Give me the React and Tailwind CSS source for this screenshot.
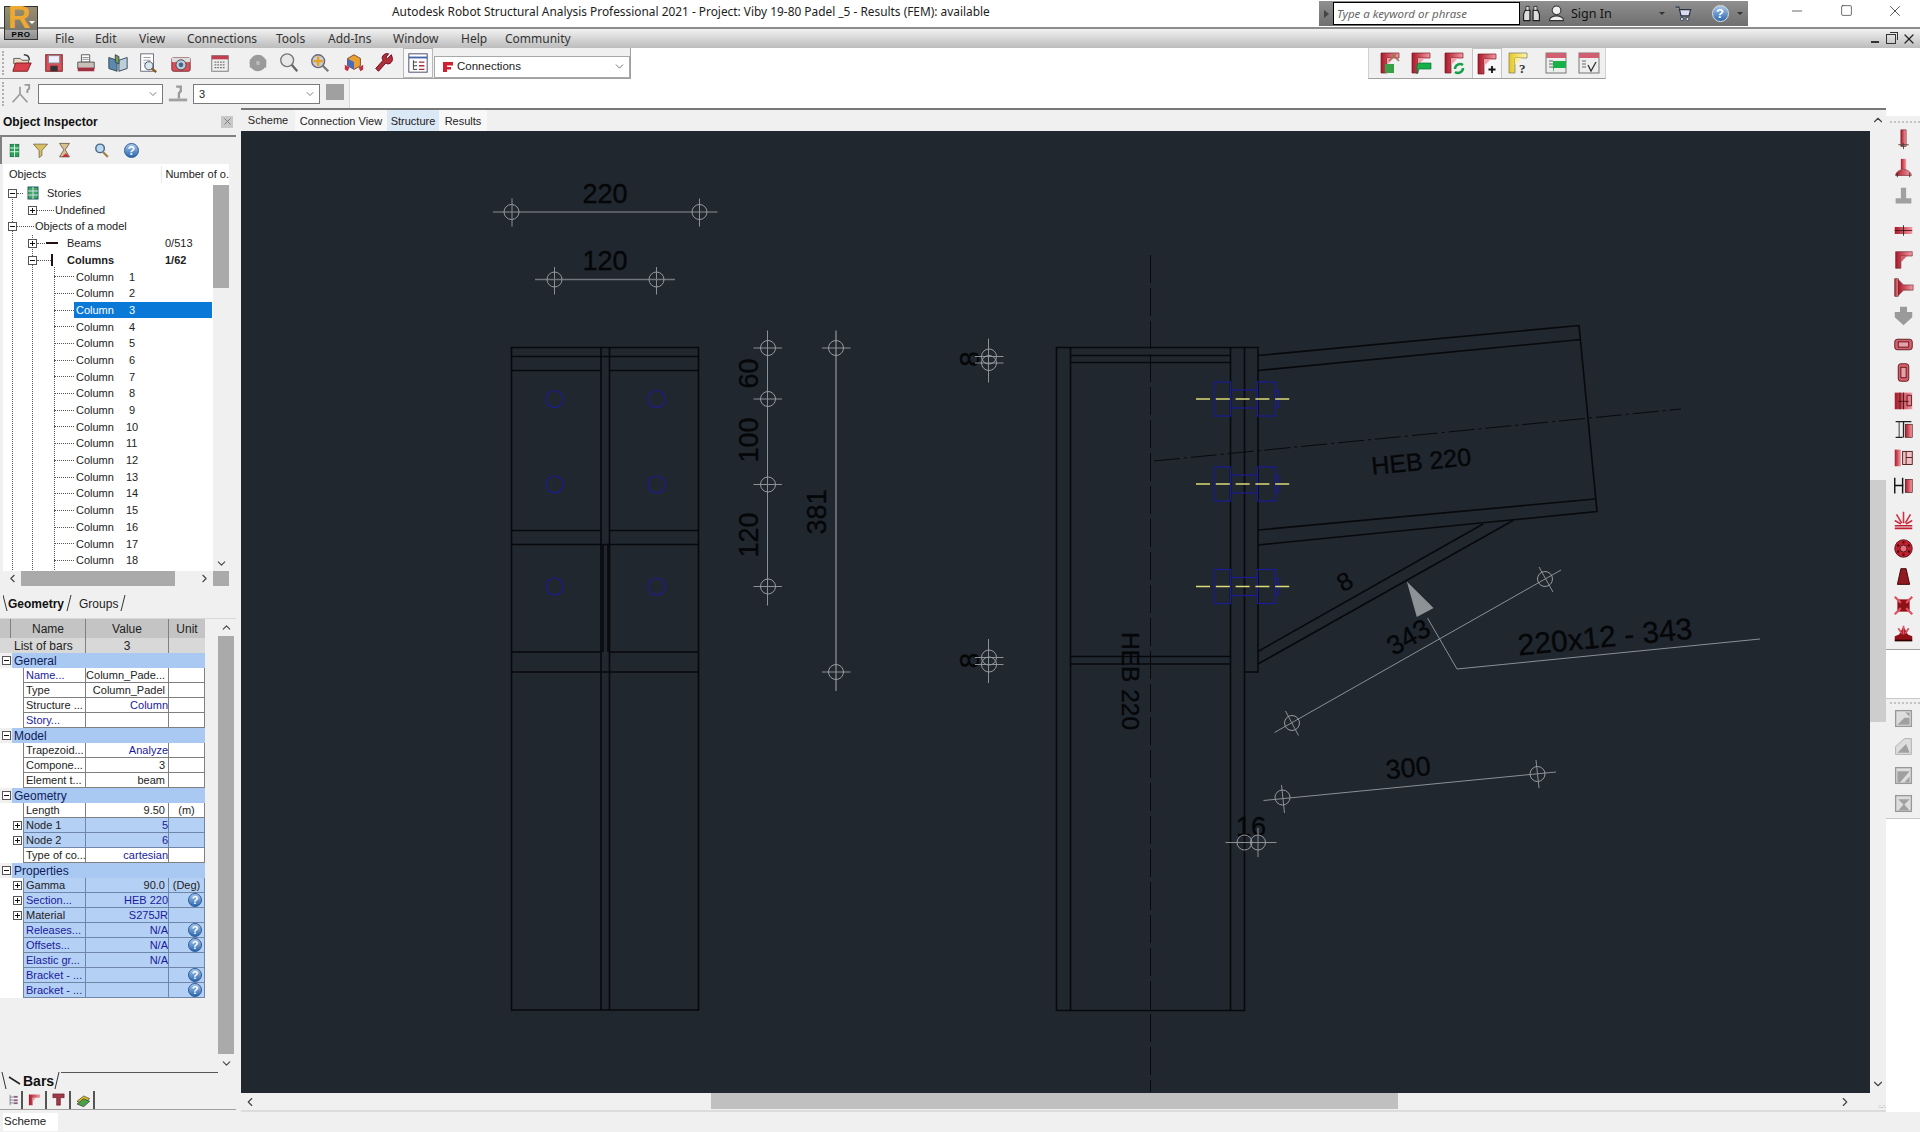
import React from 'react';
import { ChevronDown, ChevronUp, ChevronLeft, ChevronRight, X, Minus, Square } from 'lucide-react';

const menuItems = [
  { label: 'File', w: 'w-[40px]' },
  { label: 'Edit', w: 'w-[44px]' },
  { label: 'View', w: 'w-[48px]' },
  { label: 'Connections', w: 'w-[89px]' },
  { label: 'Tools', w: 'w-[52px]' },
  { label: 'Add-Ins', w: 'w-[65px]' },
  { label: 'Window', w: 'w-[68px]' },
  { label: 'Help', w: 'w-[44px]' },
  { label: 'Community', w: 'w-[80px]' },
];

function Ic({ children, size = 22, className = '' }) {
  return (
    <svg width={size} height={size} viewBox="0 0 24 24" className={`shrink-0 ${className}`}>
      {children}
    </svg>
  );
}

/* ---- main toolbar ---- */
const mainIcons = [
  { x: 'w-[33px]', el: <><path d="M3 7h7l2 2h7v4H3z" fill="#e8d9c0" stroke="#555" /><path d="M2 21l3-9h17l-4 9z" fill="#d8404c" stroke="#7a1a20" /><path d="M14 3c4 0 6 2 6 6" fill="none" stroke="#333" strokeWidth="1.5" /></> },
  { x: 'w-[32px]', el: <><rect x="3" y="3" width="18" height="18" fill="#d8505c" stroke="#7a1a20" /><rect x="6" y="4" width="12" height="8" fill="#eef" stroke="#888" /><rect x="8" y="15" width="8" height="6" fill="#333" /></> },
  { x: 'w-[32px]', el: <><path d="M7 3h9v8H7z" fill="#fff" stroke="#555" /><path d="M3 11h18v7H3z" fill="#c8c0b8" stroke="#555" /><rect x="3" y="17" width="18" height="4" fill="#a03040" /><path d="M8 6h7M8 8h7" stroke="#888" /></> },
  { x: 'w-[31px]', el: <><path d="M2 6l9 3v12l-9-3z" fill="#5a8ab0" stroke="#345" /><path d="M22 6l-9 3v12l9-3z" fill="#bcd0dc" stroke="#345" /><path d="M9 3l4 2v8l-4-2z" fill="#7a9a50" stroke="#345" /></> },
  { x: 'w-[30px]', el: <><rect x="4" y="2" width="14" height="19" fill="#fff" stroke="#667" /><path d="M7 6h8M7 9h8M7 12h4" stroke="#99a" /><circle cx="13" cy="15" r="4.5" fill="#d8e8f0" stroke="#445" /><path d="M16 18l5 4" stroke="#8a5a20" strokeWidth="2.5" /></> },
  { x: 'w-[36px]', el: <><rect x="2" y="6" width="20" height="15" rx="2" fill="#d8505c" stroke="#7a2a30" /><rect x="2" y="6" width="20" height="5" fill="#ddd" /><circle cx="12" cy="14" r="5.5" fill="#bcd" stroke="#444" /><circle cx="12" cy="14" r="2.5" fill="#468" /></> },
  { x: 'w-[42px]', el: <><rect x="3" y="4" width="18" height="17" fill="#eee" stroke="#777" /><rect x="3" y="4" width="18" height="4" fill="#c04050" /><path d="M6 11h12M6 14h12M6 17h12" stroke="#777" strokeWidth="1.5" strokeDasharray="2 1" /></> },
  { x: 'w-[34px]', el: <><circle cx="12" cy="12" r="9" fill="#9a9a9a" /><rect x="3" y="8" width="18" height="9" fill="#9a9a9a" /><path d="M11 10v4M13 10v4" stroke="#ddd" /></> },
  { x: 'w-[28px]', el: <><circle cx="10" cy="9" r="7" fill="#e8e8e8" stroke="#777" strokeWidth="1.5" /><path d="M15 14l6 7" stroke="#666" strokeWidth="2.5" /></> },
  { x: 'w-[34px]', el: <><circle cx="10" cy="10" r="7" fill="#ccc" stroke="#667" strokeWidth="1.5" /><path d="M10 5v10M5 10h10" stroke="#e8a020" strokeWidth="2.5" /><path d="M15 15l6 6" stroke="#777" strokeWidth="2.5" /></> },
  { x: 'w-[34px]', el: <><path d="M12 3l7 4v8l-7 4-7-4V7z" fill="#e8a030" stroke="#743" /><path d="M5 7l7 4v8l-7-4z" fill="#4a6ab8" /><path d="M2 14l5 3-2 4-3-2z" fill="#c03040" /><path d="M22 14l-5 3 2 4 3-2z" fill="#c03040" /></> },
  { x: 'w-[26px]', el: <path d="M20 3l-4 4-2-1 3-4c-3-1-7 1-7 5l1 2-8 9 3 3 8-9 2 1c4 0 6-4 5-7z" fill="#b03038" stroke="#602" /> },
];

function RedCorner({ children, yellow }) {
  const c = yellow ? 'url(#ygrad)' : 'url(#rgrad)';
  return (
    <Ic size={24}>
      <path d="M3 2h18v5H9v15H3z" fill={c} stroke={yellow ? '#776' : '#7a1a24'} strokeWidth=".7" />
      <path d="M9 7h7l-7 7z" fill={yellow ? '#f6eea0' : '#f0a0a8'} />
      {children}
    </Ic>
  );
}

const Tb2 = ({ children, w }) => <div className={`flex justify-center ${w}`}>{children}</div>;

function TopToolbar2() {
  return (
    <div className="flex h-[31px] w-[238px] items-center border-b border-[#a0a0a0] border-x border-x-[#d0d0d0] bg-[#f0f0f0] pl-[8px]">
      <Tb2 w="w-[26px]"><RedCorner><path d="M7 13h9v9H7z" fill="#3aa048" /><path d="M14 3l7 7M18 3l-7 7" stroke="#a07050" strokeWidth="1.5" /></RedCorner></Tb2>
      <Tb2 w="w-[36px]"><RedCorner><path d="M10 12h12v6H10l-2 5v-9z" fill="#18b048" stroke="#063" strokeWidth=".6" /></RedCorner></Tb2>
      <Tb2 w="w-[30px]"><RedCorner><path d="M13 18a5 5 0 0 1 8-4M21 17a5 5 0 0 1-8 4" fill="none" stroke="#18a048" strokeWidth="2.5" /></RedCorner></Tb2>
      <div className="ml-[3px] flex h-[30px] w-[30px] items-center justify-center border-x border-t border-[#c4c4c4] bg-[#f7f7f7]">
        <RedCorner><path d="M17 14v7M13.500 17.500h7" stroke="#111" strokeWidth="1.8" /></RedCorner>
      </div>
      <Tb2 w="w-[31px]"><RedCorner yellow><text x="13" y="22" fontSize="13" fontWeight="700" fontFamily="'Liberation Serif', serif" fill="#333">?</text></RedCorner></Tb2>
      <Tb2 w="w-[45px]">
        <Ic size={24}><rect x="2" y="2" width="20" height="20" fill="#eee" stroke="#777" /><rect x="2" y="2" width="20" height="5" fill="#d06070" /><path d="M5 10h4M5 13h4M5 16h4" stroke="#666" /><path d="M10 10h12v7H10l-1 5v-12z" fill="#18b048" /></Ic>
      </Tb2>
      <Tb2 w="w-[22px]">
        <Ic size={24}><rect x="2" y="2" width="20" height="20" fill="#eee" stroke="#777" /><rect x="2" y="2" width="20" height="5" fill="#d06070" /><path d="M5 10h4M5 13h4M5 16h4" stroke="#666" /><path d="M11 14l3 6 5-9" fill="none" stroke="#333" strokeWidth="1.3" /></Ic>
      </Tb2>
    </div>
  );
}

function Combo({ w, children }) {
  return (
    <div className={`mt-[1px] flex h-[20px] items-center justify-between border border-[#7a7a7a] bg-white pl-[5px] pr-[3px] ${w}`}>
      <div className="flex items-center gap-[3px] text-[11px] text-[#222]">{children}</div>
      <ChevronDown size={12} strokeWidth={1.5} className="text-[#555]" />
    </div>
  );
}

/* ---- tree ---- */
const dotted = 'border-t border-dotted border-[#555]';

function PlusBox({ minus, className = '' }) {
  return (
    <span className={`relative block h-[9px] w-[9px] shrink-0 border border-[#555] bg-white ${className}`}>
      <span className="absolute left-[1px] top-[3px] h-[1px] w-[5px] bg-[#111]" />
      {!minus && <span className="absolute left-[3px] top-[1px] h-[5px] w-[1px] bg-[#111]" />}
    </span>
  );
}

function TreeTop() {
  return (
    <>
      <div className="flex h-[16.7px] items-center pl-[8px]">
        <PlusBox minus /><span className={`w-[6px] ${dotted}`} />
        <svg width="14" height="14" viewBox="0 0 14 14" className="ml-[3px]"><rect x="2" y="1" width="10" height="12" fill="#3aa860" stroke="#256" /><path d="M2 5h10M2 9h10M7 1v12" stroke="#dde" /></svg>
        <span className="ml-[7px]">Stories</span>
      </div>
      <div className="flex h-[16.7px] items-center pl-[28px]">
        <PlusBox /><span className={`w-[17px] ${dotted}`} /><span className="ml-[1px]">Undefined</span>
      </div>
      <div className="flex h-[16.7px] items-center pl-[8px]">
        <PlusBox minus /><span className={`w-[17px] ${dotted}`} /><span className="ml-[1px]">Objects of a model</span>
      </div>
      <div className="flex h-[16.7px] items-center pl-[28px]">
        <PlusBox /><span className={`w-[8px] ${dotted}`} />
        <span className="ml-[1px] h-[2px] w-[12px] bg-[#201010]" />
        <span className="ml-[9px] w-[98px]">Beams</span>
        <span>0/513</span>
      </div>
      <div className="flex h-[16.7px] items-center pl-[28px] font-bold">
        <PlusBox minus /><span className={`w-[14px] ${dotted}`} />
        <span className="h-[12px] w-[2px] bg-[#201010]" />
        <span className="ml-[14px] w-[98px]">Columns</span>
        <span>1/62</span>
      </div>
    </>
  );
}

function ColumnRow({ n }) {
  const selected = n === 3;
  return (
    <div className="flex h-[16.7px] items-center pl-[54px]">
      <span className={`w-[20px] ${dotted}`} />
      <span className={`flex h-[15.500px] w-[138px] items-center pl-[2px] ${selected ? 'bg-[#0a78d7] text-white' : ''}`}>
        <span className="w-[50px]">Column</span>
        <span className={n > 9 ? 'w-[14px]' : 'w-[14px] pl-[3px]'}>{n}</span>
      </span>
    </div>
  );
}

/* ---- property grid ---- */
const gridRows = [
  { sec: 'General' },
  { name: 'Name...', nb: 1, value: 'Column_Pade...', left: 1 },
  { name: 'Type', value: 'Column_Padel' },
  { name: 'Structure ...', value: 'Column', vb: 1 },
  { name: 'Story...', nb: 1 },
  { sec: 'Model' },
  { name: 'Trapezoid...', value: 'Analyze', vb: 1 },
  { name: 'Compone...', value: '3' },
  { name: 'Element t...', value: 'beam' },
  { sec: 'Geometry' },
  { name: 'Length', value: '9.50', unit: '(m)' },
  { name: 'Node 1', value: '5', vb: 1, hl: 1, plus: 1 },
  { name: 'Node 2', value: '6', vb: 1, hl: 1, plus: 1 },
  { name: 'Type of co...', value: 'cartesian', vb: 1 },
  { sec: 'Properties' },
  { name: 'Gamma', value: '90.0', unit: '(Deg)', hl: 1, plus: 1 },
  { name: 'Section...', nb: 1, value: 'HEB 220', vb: 1, hl: 1, plus: 1, help: 1 },
  { name: 'Material', value: 'S275JR', vb: 1, hl: 1, plus: 1 },
  { name: 'Releases...', nb: 1, value: 'N/A', vb: 1, hl: 1, help: 1 },
  { name: 'Offsets...', nb: 1, value: 'N/A', vb: 1, hl: 1, help: 1 },
  { name: 'Elastic gr...', nb: 1, value: 'N/A', vb: 1, hl: 1 },
  { name: 'Bracket - ...', nb: 1, hl: 1, help: 1 },
  { name: 'Bracket - ...', nb: 1, hl: 1, help: 1 },
];

function HelpDot({ size = 'h-[14px] w-[14px] text-[11px]' }) {
  return (
    <span className={`flex items-center justify-center rounded-full border border-[#2a5a9a] bg-gradient-to-b from-[#a8c8e8] to-[#2a68b0] font-bold leading-none text-white ${size}`}>?</span>
  );
}

function GridRow({ row }) {
  if (row.sec) {
    return (
      <div className="flex h-[15px] items-center">
        <PlusBox minus className="ml-[2px]" />
        <div className="ml-[1px] flex h-[15px] w-[193px] items-center bg-[#a9c9f2] pl-[2px] text-[12px] text-[#10205a]">{row.sec}</div>
      </div>
    );
  }
  const border = row.hl ? 'border-[#6f86a8]' : 'border-[#808080]';
  const bg = row.hl ? 'bg-[#b5d0f5]' : 'bg-white';
  return (
    <div className="flex h-[15px] items-center bg-white">
      <div className="flex w-[23px] justify-end pr-[1px]">{row.plus && <PlusBox />}</div>
      <div className={`flex h-[15px] w-[63px] items-center overflow-hidden whitespace-nowrap border-b border-l border-r ${border} ${bg} pl-[2px] ${row.nb ? 'text-[#1a1a9c]' : 'text-[#222]'}`}>{row.name}</div>
      <div className={`flex h-[15px] w-[83px] items-center justify-end whitespace-nowrap border-b border-r ${border} ${bg} ${row.vb ? 'text-[#1a1a9c]' : 'pr-[3px] text-[#222]'}`}>{row.value}</div>
      <div className={`flex h-[15px] w-[36px] items-center border-b border-r ${border} ${bg} text-[#222] ${row.help ? 'justify-end pr-[2px]' : 'justify-center'}`}>
        {row.help ? <HelpDot /> : row.unit}
      </div>
    </div>
  );
}

/* ---- left panel ---- */
function ObjectInspector() {
  return (
    <div className="flex h-full w-[236px] flex-col bg-[#f0f0f0] font-['Liberation_Sans',sans-serif]">
      <div className="flex h-[27px] items-center justify-between pl-[3px] pr-[3px]">
        <span className="text-[12px] font-bold text-[#111]">Object Inspector</span>
        <span className="flex h-[12px] w-[12px] items-center justify-center bg-[#c8c8c8] text-[#777]"><X size={11} strokeWidth={2} /></span>
      </div>
      <div className="flex h-[29px] items-center gap-0 border-l-2 border-t-2 border-[#808080] pl-[5px]">
        <Ic size={15}><rect x="5" y="2" width="14" height="20" fill="#2aa050" stroke="#154" /><path d="M5 8h14M5 14h14M12 2v20" stroke="#dfe" strokeWidth="1.5" /></Ic>
        <Ic size={17} className="ml-[10px]"><path d="M2 3h20l-8 9v7l-4 3V12z" fill="#d8c060" stroke="#654" /></Ic>
        <Ic size={17} className="ml-[7px]"><path d="M5 2h14l-6 9 6 10H5l6-10z" fill="#d8c090" stroke="#543" /><path d="M8 21l6-5 5 5z" fill="#c03040" /></Ic>
        <Ic size={17} className="ml-[20px]"><circle cx="10" cy="9" r="6" fill="#bcd8f0" stroke="#468" strokeWidth="2" /><path d="M14 14l7 7" stroke="#a08050" strokeWidth="3" /></Ic>
        <HelpDot size="ml-[14px] h-[15px] w-[15px] text-[12px]" />
      </div>
      <div className="ml-[3px] flex h-[422px] w-[226px] flex-col bg-white text-[11px] text-[#222]">
        <div className="flex h-[21px] items-center">
          <span className="w-[162px] border-r border-[#e8e8e8] pl-[6px]">Objects</span>
          <span className="whitespace-nowrap pl-[3px]">Number of o.</span>
        </div>
        <div className="flex h-[386px]">
          <div className="relative w-[210px] overflow-hidden">
            <span className="absolute left-[9px] top-[14px] h-[373px] border-l border-dotted border-[#555]" />
            <span className="absolute left-[29px] top-[50px] h-[337px] border-l border-dotted border-[#555]" />
            <span className="absolute left-[51px] top-[82px] h-[305px] border-l border-dotted border-[#555]" />
            <div className="relative -ml-[3px]">
              <TreeTop />
              {Array.from({ length: 18 }, (_, i) => <ColumnRow key={i} n={i + 1} />)}
            </div>
          </div>
          <div className="flex w-[16px] flex-col bg-[#f0f0f0]">
            <div className="h-[103px] bg-[#aaaaaa]" />
            <div className="flex-1" />
            <div className="flex h-[16px] items-center justify-center text-[#444]"><ChevronDown size={13} strokeWidth={2} /></div>
          </div>
        </div>
        <div className="flex h-[15px] bg-[#f0f0f0]">
          <div className="flex w-[18px] items-center justify-center text-[#444]"><ChevronLeft size={13} strokeWidth={2} /></div>
          <div className="w-[154px] bg-[#aaaaaa]" />
          <div className="flex w-[38px] items-center justify-end pr-[2px] text-[#444]"><ChevronRight size={13} strokeWidth={2} /></div>
          <div className="w-[16px] bg-[#aaaaaa]" />
        </div>
      </div>
      <div className="flex h-[32px] items-start pl-[3px] pt-[9px] text-[12px] text-[#222]">
        <svg width="5" height="16"><line x1="0" y1="0" x2="4" y2="16" stroke="#333" /></svg>
        <span className="font-bold text-[#111]">Geometry</span>
        <svg width="9" height="16" className="ml-[2px]"><line x1="1" y1="16" x2="5" y2="0" stroke="#333" /></svg>
        <span className="ml-[4px]">Groups</span>
        <svg width="6" height="16" className="ml-[2px]"><line x1="1" y1="16" x2="5" y2="0" stroke="#333" /></svg>
      </div>
      <div className="flex h-[454px] border-t border-[#d8d8d8]">
        <div className="flex w-[218px] flex-col">
          <div className="w-[205px] text-[11px]">
            <div className="flex h-[19px] items-center bg-[#c4c4c4] text-[12px] text-[#222]">
              <span className="h-full w-[11px] border-r border-[#808080]" />
              <span className="flex h-full w-[75px] items-center justify-center border-r border-[#808080]">Name</span>
              <span className="flex h-full w-[83px] items-center justify-center border-r border-[#808080]">Value</span>
              <span className="flex h-full w-[36px] items-center justify-center">Unit</span>
            </div>
            <div className="flex h-[15px] items-center bg-[#d8d8d8] text-[12px] text-[#222]">
              <span className="w-[86px] border-r border-[#808080] pl-[14px]">List of bars</span>
              <span className="w-[83px] border-r border-[#808080] text-center">3</span>
            </div>
            {gridRows.map((row, i) => <GridRow key={i} row={row} />)}
          </div>
        </div>
        <div className="flex w-[16px] flex-col">
          <div className="flex h-[17px] items-center justify-center text-[#444]"><ChevronUp size={13} strokeWidth={2} /></div>
          <div className="h-[418px] bg-[#aaaaaa]" />
          <div className="flex flex-1 items-center justify-center text-[#444]"><ChevronDown size={13} strokeWidth={2} /></div>
        </div>
      </div>
      <div className="flex h-[18px] items-start border-t-0 pl-[1px]">
        <div className="flex items-center">
          <svg width="6" height="18"><line x1="1" y1="0" x2="5" y2="17" stroke="#333" /></svg>
          <svg width="14" height="10" className="ml-[1px]"><line x1="1" y1="1" x2="12" y2="8" stroke="#222" strokeWidth="1.5" /></svg>
          <span className="ml-[1px] text-[14px] font-bold leading-[18px] text-[#111]">Bars</span>
          <svg width="7" height="18"><line x1="1" y1="17" x2="5" y2="0" stroke="#333" /></svg>
        </div>
        <div className="h-[1px] w-[157px] bg-[#555]" />
      </div>
      <div className="flex h-[20px] items-center border-b border-[#a0a0a0] pl-[4px]">
        <div className="flex h-[18px] w-[19px] items-center justify-center border-r-2 border-[#555]">
          <Ic size={14}><path d="M7 3v18M7 7h5M7 12h5M7 17h5" stroke="#446" fill="none" /><rect x="13" y="5" width="7" height="3" fill="#8a5a80" /><rect x="13" y="11" width="7" height="3" fill="#8a5a80" /><rect x="13" y="16" width="7" height="3" fill="#8a5a80" /></Ic>
        </div>
        <div className="ml-[1px] flex h-[18px] w-[23px] items-center justify-center border-r-2 border-[#555]">
          <Ic size={15}><path d="M3 4h18v5H9v12H3z" fill="url(#rgrad)" /><path d="M9 9h5l-5 6z" fill="#e0a0a0" /></Ic>
        </div>
        <div className="ml-[1px] flex h-[18px] w-[23px] items-center justify-center border-r-2 border-[#555]">
          <Ic size={15}><path d="M3 3h18v6h-6v12H9V9H3z" fill="#a03848" stroke="#622" /></Ic>
        </div>
        <div className="ml-[1px] flex h-[18px] w-[23px] items-center justify-center border-r-2 border-[#555]">
          <Ic size={16}><path d="M3 14l10-8 9 4-9 8z" fill="#e0c020" stroke="#333" /><path d="M3 18l10-8 9 4-9 8z" fill="#48a048" stroke="#333" /></Ic>
        </div>
      </div>
    </div>
  );
}

/* ---- drawing ---- */
const dimStroke = '#8a9095';
const holeStroke = '#979b9f';
const boltBlue = '#1c1c96';

function Hole({ x, y, r = 7.5 }) {
  return <circle cx={x} cy={y} r={r} fill="none" stroke={holeStroke} strokeWidth="1" />;
}
function Ln({ d, c = '#07090c', w = 1.6, dash }) {
  return <path d={d} fill="none" stroke={c} strokeWidth={w} strokeDasharray={dash} />;
}
function Dim({ d }) {
  return <path d={d} fill="none" stroke={dimStroke} strokeWidth="1" />;
}
function Txt({ x, y, size = 27, rot = 0, anchor = 'middle', children }) {
  return (
    <text x={x} y={y} fontSize={size} fill="#050608" stroke="#050608" strokeWidth=".35" textAnchor={anchor} transform={rot ? `rotate(${rot} ${x} ${y})` : undefined}>
      {children}
    </text>
  );
}

function Bolt({ y }) {
  return (
    <g>
      <g fill="none" stroke={boltBlue} strokeWidth="1.2">
        <rect x="1214" y={y - 17} width="16.500" height="34" />
        <rect x="1257.500" y={y - 17} width="18" height="34" />
        <rect x="1230.500" y={y - 9} width="27" height="18" />
        <rect x="1275.500" y={y - 8} width="3" height="16" />
      </g>
      <Ln d={`M1196 ${y}H1291.500`} c="#dcdc78" w={1.5} dash="14 5.800" />
    </g>
  );
}

function Drawing() {
  return (
    <svg viewBox="241 131 1629 962" width="1629" height="962" className="block font-['Liberation_Sans',sans-serif]">
      {/* left view */}
      <Ln d="M511.500 347.500H698.500V1010H511.500Z" />
      <Ln d="M511.500 356.500H698.500M511.500 370.500H601M609.500 370.500H698.500M511.500 530.500H601M609.500 530.500H698.500M511.500 544.500H698.500M511.500 652H602M609 652H698.500M511.500 672H698.500" />
      <Ln d="M601 347.500V1010M609.500 347.500V1010" />
      <Ln d="M603 545V652M608 545V652" w={1.6} />
      <g fill="none" stroke={boltBlue} strokeWidth="1.2">
        {[554.500, 656.500].map((x) => [399, 484.500, 586.500].map((y) => <circle key={`${x}-${y}`} cx={x} cy={y} r="8.500" />))}
      </g>

      {/* dims above */}
      <Dim d="M493 212H717.500M512 198.500V226.500M699.500 198.500V226.500" />
      <Hole x={511.500} y={212} /><Hole x={699.500} y={212} />
      <Txt x={605} y={203}>220</Txt>
      <Dim d="M535 279.500H675M554.500 267V294.500M656.500 267V294.500" />
      <path d="M535 279.500H675" stroke="#70767b" strokeWidth="1.500" />
      <Hole x={554.500} y={279.500} /><Hole x={656.500} y={279.500} />
      <Txt x={605} y={270}>120</Txt>

      {/* vertical dims */}
      <Dim d="M767.500 330.500V605.500M753.500 348H782M753.500 399H782M753.500 484.500H782M753.500 586.500H782" />
      {[348, 399, 484.500, 586.500].map((y) => <Hole key={y} x={768} y={y} />)}
      <Txt x={758} y={373.500} rot={-90}>60</Txt>
      <Txt x={758} y={440} rot={-90}>100</Txt>
      <Txt x={758} y={535} rot={-90}>120</Txt>
      <path d="M836 330.500V691" stroke="#7b8186" strokeWidth="1.500" fill="none" />
      <Dim d="M822 348H850.500M822 672H850.500" />
      <Hole x={836} y={348} /><Hole x={836} y={672} />
      <Txt x={826} y={512} rot={-90}>381</Txt>
      <Txt x={979} y={359} size={28} rot={-90}>8</Txt>
      <Dim d="M988.500 338.500V382.500M975 356.500H1003.500M975 363H1003.500" />
      <Hole x={989} y={356.500} /><Hole x={989} y={363} />
      <Txt x={979} y={660.500} size={28} rot={-90}>8</Txt>
      <Dim d="M988.500 639V683M975 657.500H1003.500M975 664.500H1003.500" />
      <Hole x={989} y={657.500} /><Hole x={989} y={664.500} />

      {/* right view */}
      <Ln d="M1056.500 347.500H1244.500V1010.500H1056.500Z" />
      <Ln d="M1070.500 347.500V1010.500M1230.500 347.500V1010.500" />
      <Ln d="M1244.500 347.500H1258V672H1244.500" />
      <Ln d="M1070.500 355.500H1230.500M1070.500 362.500H1230.500M1070.500 656.500H1230.500M1070.500 664H1230.500" />
      <Ln d="M1150.500 255V1092" w={1} dash="28 5" />

      {/* beam */}
      <Ln d="M1258 355.500L1579 325.500L1597 511.500L1258 545" />
      <Ln d="M1258 370.500L1581 339.500" />
      <Ln d="M1258 530L1595 499" />
      <Ln d="M1258 651.500L1483 524M1258 664L1513 520.500" />
      <Ln d="M1154 461L1681 409" w={1} dash="26 4 3 4" />
      <Bolt y={399} /><Bolt y={484} /><Bolt y={586.500} />
      <Txt x={1422} y={470} size={25} rot={-5.500}>HEB 220</Txt>
      <Txt x={1122} y={632} size={24.500} rot={90} anchor="start">HEB 220</Txt>
      <Txt x={1349} y={589} size={25} rot={-30}>8</Txt>

      {/* leader */}
      <path d="M1406.800 581.500L1416.800 617L1433.600 608Z" fill="#8d9297" />
      <Dim d="M1427.500 618L1457 669L1760 639" />
      <Txt x={1413} y={645} size={27} rot={-30}>343</Txt>
      <Txt x={1606} y={647} size={30} rot={-5.500}>220x12 - 343</Txt>
      <Dim d="M1561 570L1274.500 732.500M1539 567L1553 592M1285.500 711L1298.500 735.500" />
      <Hole x={1545} y={579} /><Hole x={1292} y={723} />

      <Dim d="M1263.500 800.500L1556 772M1281.500 785L1284.500 813M1536 760L1539 788" />
      <Hole x={1282.500} y={797.500} /><Hole x={1537.500} y={774} />
      <Txt x={1409} y={777} rot={-5.500}>300</Txt>
      <Txt x={1251} y={836}>16</Txt>
      <Dim d="M1225.500 842.500H1276.500M1258 828V857" />
      <Hole x={1244.500} y={842.500} /><Hole x={1258} y={842.500} />
    </svg>
  );
}

/* ---- right toolbar ---- */
const Rg = 'url(#rgrad)';
const rightIcons = [
  { mt: 'mt-[2.500px]', el: <><rect x="9" y="1" width="6" height="19" fill={Rg} stroke="#611" strokeWidth=".6" /><path d="M6 18h12M12 16v7" stroke="#444" /></> },
  { el: <><rect x="9" y="1" width="6" height="12" fill={Rg} /><path d="M3 20c0-4 5-7 9-7s9 3 9 7z" fill={Rg} stroke="#611" strokeWidth=".6" /><path d="M5 17v5M19 17v5" stroke="#333" /></> },
  { el: <path d="M9 2h6v12h6v6H3v-6h6z" fill="#a0a0a0" /> },
  { mt: 'mt-[6px]', el: <><rect x="2" y="8" width="20" height="8" fill={Rg} /><path d="M2 12h20" stroke="#511" /><path d="M12 6v12" stroke="#222" /></> },
  { el: <><path d="M3 3h19v5H9v14H3z" fill={Rg} stroke="#511" strokeWidth=".6" /><path d="M9 8h7l-7 7z" fill="#d06070" /></> },
  { el: <><rect x="2" y="2" width="4" height="20" fill={Rg} stroke="#511" strokeWidth=".6" /><path d="M6 3l6 6h11v6H12l-6 6z" fill={Rg} stroke="#511" strokeWidth=".6" /></> },
  { el: <path d="M8 2h8v6h6v6l-10 9L2 14V8h6z" fill="#9a9a9a" /> },
  { el: <><rect x="2" y="6" width="20" height="12" rx="3" fill="#d86070" stroke="#511" /><rect x="6" y="9" width="12" height="6" fill="#e8a0a8" stroke="#511" /></> },
  { el: <><rect x="6" y="2" width="12" height="20" rx="3" fill="#d86070" stroke="#511" /><rect x="9" y="6" width="6" height="12" fill="#e8a0a8" stroke="#511" /></> },
  { el: <><rect x="2" y="3" width="20" height="19" fill={Rg} /><path d="M12 3v19M8 3v19M6 13h12M16 6h5v12h-5z" stroke="#411" fill="none" /></> },
  { el: <><path d="M3 3h18M12 3v18M3 21h8" stroke="#222" strokeWidth="1.5" /><path d="M7 3v18" stroke="#222" /><rect x="14" y="6" width="8" height="15" fill={Rg} stroke="#411" strokeWidth=".7" /></> },
  { el: <><rect x="2" y="3" width="7" height="19" fill={Rg} /><rect x="11" y="5" width="11" height="15" fill="#f0c0c4" stroke="#411" /><path d="M15 5v15M15 12h7" stroke="#411" /></> },
  { el: <><path d="M2 3v18M2 12h10M11 3v18" stroke="#111" strokeWidth="1.6" /><rect x="14" y="5" width="8" height="15" fill={Rg} stroke="#411" strokeWidth=".7" /></> },
  { mt: 'mt-[6px]', el: <><path d="M12 2v13M4 5l6 10M20 5l-6 10M2 12l7 4M22 12l-7 4" stroke="#d03040" strokeWidth="1.8" /><path d="M2 18h20M2 21h20" stroke="#c02030" strokeWidth="1.8" /></> },
  { el: <><circle cx="12" cy="12" r="10" fill="#c02030" stroke="#511" /><circle cx="12" cy="12" r="4" fill="#e87080" stroke="#411" />{[0, 60, 120, 180, 240, 300].map((a) => <circle key={a} cx="12" cy="5" r="1.300" fill="#400" transform={`rotate(${a} 12 12)`} />)}</> },
  { el: <path d="M9 3h6l4 18H5z" fill="#901820" stroke="#300" /> },
  { el: <><rect x="5" y="5" width="14" height="14" fill="#901018" /><path d="M2 2l7 7M22 2l-7 7M2 22l7-7M22 22l-7-7" stroke="#e05060" strokeWidth="2.5" /></> },
  { el: <><path d="M2 15l5-2 5-9 5 9 5 2v5H2z" fill="#901018" /><path d="M2 20h20" stroke="#300" strokeWidth="2" /><path d="M12 3v10M6 6l4 6M18 6l-4 6" stroke="#e05060" strokeWidth="2" /></> },
];
const greyIcons = [
  <><rect x="3" y="3" width="18" height="18" fill="#ddd" stroke="#999" strokeWidth="1.500" /><path d="M5 19l8-8 6 0v8z" fill="#a0a0a0" /><path d="M14 5h5v5z" fill="#a0a0a0" /></>,
  <><path d="M3 21V12L13 3h8v18z" fill="#ddd" stroke="#aaa" /><path d="M5 19l10-10 4 10z" fill="#a0a0a0" /></>,
  <><rect x="3" y="3" width="18" height="18" fill="#ddd" stroke="#999" strokeWidth="1.500" /><path d="M5 7h14L8 20H5zM13 20l6-7v7z" fill="#a0a0a0" /></>,
  <><rect x="3" y="3" width="18" height="18" fill="#ddd" stroke="#999" strokeWidth="1.500" /><path d="M6 7h13l-6 6 6 7H6l6-7z" fill="#a0a0a0" /></>,
];

function RightToolbar() {
  return (
    <div className="flex h-full w-[34px] flex-col bg-white">
      <div className="mt-[8px] flex h-[534px] flex-col items-start border-b border-[#a0a0a0] bg-[#f0f0f0] pl-[4px]">
        <div className="mt-[5px] h-0 w-full border-t-2 border-dotted border-[#c4c4c4]" />
        {rightIcons.map((ic, i) => (
          <div key={i} className={`flex h-[28.350px] w-[26px] items-center justify-center ${ic.mt || ''}`}>
            <Ic size={21}>{ic.el}</Ic>
          </div>
        ))}
      </div>
      <div className="mt-[48px] flex h-[121px] flex-col border-y border-[#c8c8c8] bg-[#f0f0f0] pl-[4px]">
        <div className="mt-[3px] h-0 w-full border-t-2 border-dotted border-[#c4c4c4]" />
        {greyIcons.map((el, i) => (
          <div key={i} className="flex h-[28.500px] w-[26px] items-center justify-center"><Ic size={21}>{el}</Ic></div>
        ))}
      </div>
      <div className="flex-1 bg-white" />
    </div>
  );
}

export default function App() {
  return (
    <div className="relative flex h-[1132px] w-[1920px] flex-col overflow-hidden bg-white font-['Liberation_Sans',sans-serif]">
      {/* gradients shared by the small icons */}
      <svg width="0" height="0" className="absolute">
        <defs>
          <linearGradient id="rgrad" x1="0" y1="0" x2="1" y2="0">
            <stop offset="0" stopColor="#a81828" />
            <stop offset="1" stopColor="#f49aa4" />
          </linearGradient>
          <linearGradient id="ygrad" x1="0" y1="0" x2="1" y2="0">
            <stop offset="0" stopColor="#e8c820" />
            <stop offset="1" stopColor="#fdf6b0" />
          </linearGradient>
        </defs>
      </svg>

      {/* application button */}
      <div className="absolute left-[4px] top-[6px] z-10 flex h-[34px] w-[34px] flex-col border border-[#333] bg-gradient-to-b from-[#9a8f6c] to-[#6c6c6c]">
        <div className="relative h-[23px]">
          <span className="absolute left-[3px] top-[-1px] text-[31px] font-bold leading-[24px] text-[#eeaa30]">R</span>
          <span className="absolute right-[2px] top-[14px] h-0 w-0 border-x-[3px] border-t-[3px] border-x-transparent border-t-white" />
        </div>
        <div className="relative flex flex-1 items-center justify-center bg-gradient-to-b from-[#a8a8a8] to-[#8c8c8c] text-[8px] font-bold leading-[9px] tracking-[0.5px] text-black">PRO</div>
      </div>

      {/* title bar */}
      <div className="relative flex h-[27px] shrink-0 items-center bg-white">
        <div className="ml-[392px] w-[620px] whitespace-nowrap pb-[4px] font-['Noto_Sans',sans-serif] text-[11.880px] text-[#1c1c1c]">
          Autodesk Robot Structural Analysis Professional 2021 - Project: Viby 19-80 Padel _5 - Results (FEM): available
        </div>
        <div className="ml-[307px] flex h-[25px] w-[429px] items-center bg-gradient-to-b from-[#8f8f8f] to-[#6f6f6f]">
          <span className="ml-[5px] h-0 w-0 border-y-[4px] border-l-[5px] border-y-transparent border-l-[#444]" />
          <div className="ml-[4px] flex h-[23px] w-[187px] items-center border border-black bg-white pl-[3px] font-['Noto_Sans',sans-serif] text-[11.500px] italic text-[#666]">Type a keyword or phrase</div>
          <Ic size={19} className="ml-[2px]"><path d="M4 8h6v13H2v-8zM14 8h6l2 5v8h-8z" fill="#ddd" stroke="#222" strokeWidth="1.500" /><path d="M5 3h4v5H5zM15 3h4v5h-4z" fill="#ddd" stroke="#222" /></Ic>
          <Ic size={19} className="ml-[5.500px]"><circle cx="12" cy="8" r="5.500" fill="#eee" stroke="#333" strokeWidth="1.300" /><path d="M3 21c0-4 5-6 9-6s9 2 9 6z" fill="#eee" stroke="#333" strokeWidth="1.300" /></Ic>
          <span className="ml-[5.500px] w-[88px] pt-[2px] font-['Noto_Sans',sans-serif] text-[12.500px] text-[#111]">Sign In</span>
          <span className="h-0 w-0 border-x-[3px] border-t-[3px] border-x-transparent border-t-[#333]" />
          <Ic size={19} className="ml-[8.500px]"><path d="M2 4h4l3 11h10l2-8H7" fill="#dde" stroke="#234" strokeWidth="1.500" /><circle cx="10" cy="19" r="2" fill="#dde" stroke="#234" /><circle cx="17" cy="19" r="2" fill="#dde" stroke="#234" /></Ic>
          <HelpDot size="ml-[19px] h-[17px] w-[17px] text-[13px] border-[#ddd]" />
          <span className="ml-[8.500px] h-0 w-0 border-x-[3px] border-t-[3px] border-x-transparent border-t-[#333]" />
        </div>
        <div className="ml-[41px] flex items-center pb-[6px]">
          <Minus size={16} strokeWidth={1} className="text-[#222]" />
          <Square size={13} strokeWidth={1.200} className="ml-[34.500px] text-[#222]" />
          <X size={18} strokeWidth={1} className="ml-[33.500px] text-[#222]" />
        </div>
      </div>

      {/* menu bar */}
      <div className="flex h-[21px] shrink-0 items-center border-t-2 border-[#8c8c8c] bg-gradient-to-b from-[#f2f2f2] to-[#bcbcbc] pl-[55px] font-['Noto_Sans',sans-serif] text-[12px] text-[#333]">
        {menuItems.map((m) => <span key={m.label} className={m.w}>{m.label}</span>)}
        <div className="ml-auto flex items-center pr-[3px] text-[#222]">
          <span className="mt-[6px] h-[2px] w-[8px] bg-[#333]" />
          <span className="relative ml-[7px] block h-[10px] w-[10px] border border-[#333]"><span className="absolute -right-[3px] -top-[3px] h-[8px] w-[8px] border-r border-t border-[#333]" /></span>
          <X size={16} strokeWidth={1.800} className="ml-[5px]" />
        </div>
      </div>

      {/* toolbars */}
      <div className="flex h-[60px] shrink-0 flex-col">
        <div className="flex h-[31px] items-start">
          <div className="flex h-[31px] w-[631px] items-center border-b border-r border-[#a0a0a0] bg-[#f0f0f0]">
            <span className="ml-[2px] h-[24px] border-l-2 border-dotted border-[#b0b0b0]" />
            <div className="ml-[1px] flex">
              {mainIcons.map((ic, i) => (
                <div key={i} className={`flex justify-center ${ic.x}`}><Ic size={22}>{ic.el}</Ic></div>
              ))}
            </div>
            <div className="ml-[6px] flex h-[30px] w-[30px] items-center justify-center border border-[#b8b8b8] bg-[#f8f8f8]">
              <Ic size={22}><rect x="2" y="2" width="20" height="20" fill="#fff" stroke="#446" /><path d="M2 6h20" stroke="#46a" strokeWidth="2" /><path d="M7 9v10M7 11h4M7 15h4M7 19h4" stroke="#333" /><path d="M13 11h6M13 15h6M13 19h6" stroke="#a03040" strokeWidth="1.500" /></Ic>
            </div>
            <div className="ml-[1px] mt-[7px] flex h-[22px] w-[196px] items-center justify-between border border-[#a8a8a8] bg-white pl-[7px] pr-[3px]">
              <div className="flex items-center gap-[3px] text-[11.500px] text-[#222]">
                <Ic size={12}><path d="M2 2h20v7H10v3h8v5h-8v5H2z" fill="#d02030" /></Ic>
                Connections
              </div>
              <ChevronDown size={13} strokeWidth={1.500} className="text-[#555]" />
            </div>
          </div>
          <div className="ml-[737px]"><TopToolbar2 /></div>
        </div>
        <div className="flex h-[29px] w-[350px] items-center border-r border-[#d8d8d8] bg-[#f0f0f0]">
          <span className="ml-[2px] h-[24px] border-l-2 border-dotted border-[#b0b0b0]" />
          <Ic size={22} className="ml-[5px]"><path d="M12 12L4 21M12 12l8 9M12 12V4" stroke="#9a9a9a" strokeWidth="1.800" fill="none" /><path d="M17 2h5v4l-2 2v3" stroke="#999" strokeWidth="2" fill="none" /></Ic>
          <div className="ml-[7px]"><Combo w="w-[125px]" /></div>
          <Ic size={22} className="ml-[4px]"><rect x="2" y="17" width="20" height="3" fill="#a0a0a0" /><path d="M10 4h5v5l-2 2v6" stroke="#999" strokeWidth="2.500" fill="none" /></Ic>
          <div className="ml-[4px]"><Combo w="w-[127px]">3</Combo></div>
          <span className="ml-[6px] mb-[4px] h-[16px] w-[18px] bg-[#a0a0a0]" />
        </div>
      </div>

      {/* main area */}
      <div className="flex h-[1004px] shrink-0">
        <ObjectInspector />
        <div className="w-[5px] bg-[#f0f0f0]" />
        <div className="flex w-[1645px] flex-col border-t-2 border-[#777]">
          <div className="flex h-[983px]">
            <div className="flex w-[1629px] flex-col">
              <div className="flex h-[21px] items-center bg-[#f0f0f0] text-[11px] text-[#222]">
                <span className="flex h-[21px] w-[54px] items-center justify-center pb-[1px]">Scheme</span>
                <span className="flex h-[21px] w-[92px] items-center justify-center bg-[#f8f8f8] pt-[2px]">Connection View</span>
                <span className="flex h-[21px] w-[52px] items-center justify-center bg-[#dbe8f6] pt-[2px]">Structure</span>
                <span className="flex h-[21px] w-[48px] items-center justify-center bg-[#f8f8f8] pt-[2px]">Results</span>
              </div>
              <div className="h-[962px] overflow-hidden bg-[#20272f]">
                <Drawing />
              </div>
            </div>
            <div className="flex w-[16px] flex-col bg-[#f0f0f0] text-[#444]">
              <div className="flex h-[20px] items-center justify-center"><ChevronUp size={14} strokeWidth={2} /></div>
              <div className="mt-[350px] h-[242px] bg-[#cdcdcd]" />
              <div className="mb-[1px] mt-auto flex h-[16px] items-center justify-center"><ChevronDown size={14} strokeWidth={2} /></div>
            </div>
          </div>
          <div className="flex h-[19px] border-b-2 border-[#dcdcdc] bg-[#f0f0f0]">
            <div className="flex w-[18px] items-center justify-center text-[#444]"><ChevronLeft size={14} strokeWidth={2} /></div>
            <div className="ml-[452px] h-[16px] w-[687px] bg-[#c0c0c0]" />
            <div className="ml-auto flex w-[36px] items-center text-[#444]"><ChevronRight size={14} strokeWidth={2} /></div>
            <div className="flex w-[12px] flex-col items-end justify-end pb-[1px] text-[6px] leading-[5px] tracking-[0px] text-[#999]">∴∴</div>
          </div>
        </div>
        <RightToolbar />
      </div>

      {/* status bar */}
      <div className="flex h-[20px] shrink-0 items-center bg-[#f0f0f0] pl-[3px] text-[11.500px] text-[#222]">
        <span className="flex h-[18px] w-[55px] items-center bg-white pl-[1px]">Scheme</span>
      </div>
    </div>
  );
}
